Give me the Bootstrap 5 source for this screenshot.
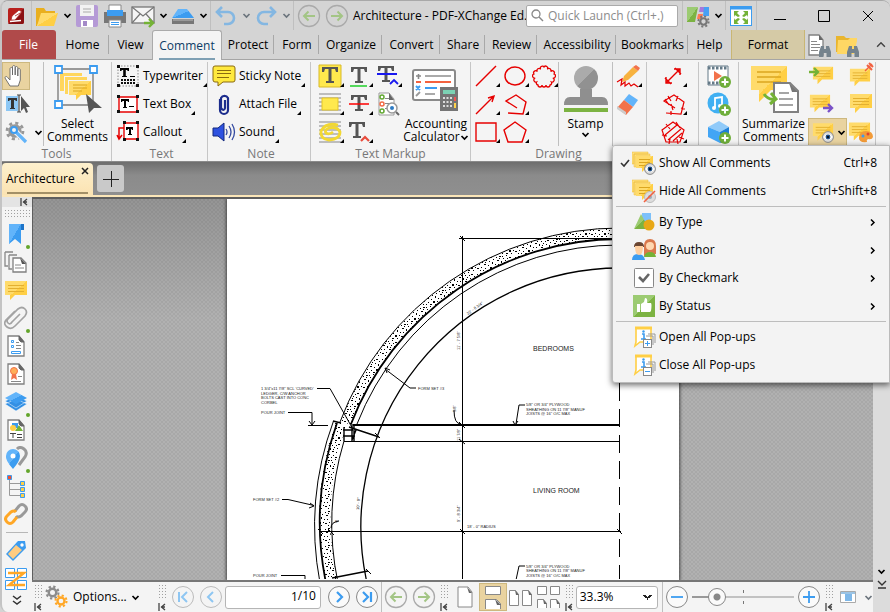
<!DOCTYPE html>
<html lang="en">
<head>
<meta charset="utf-8">
<meta name="viewport" content="width=device-width, initial-scale=1">
<title>Architecture - PDF-XChange Editor</title>
<link href="https://cdn.jsdelivr.net/npm/bootstrap@5.3.0/dist/css/bootstrap.min.css" rel="stylesheet">
<style>
:root{--chrome:#d4d4d4;--panel:#f4f4f4;--sel:#e9d3a0;--rule:#bfbfbf}
body{font-family:"Open Sans","Noto Sans",sans-serif;font-size:12px;line-height:16px;color:#000;background:var(--chrome);min-height:100vh}
button,input,select{font:inherit;color:inherit}
button{background:none;border:0;padding:0;white-space:nowrap;flex-shrink:0}
svg{display:block;flex:none}
.app-shell{min-height:100vh;border-left:2px solid #c4c4c4;border-top:1px solid #a8a8a8;border-radius:8px 8px 0 8px;overflow:hidden}
.i8{width:9px;height:9px}.i20{width:20px;height:20px}.i24{width:24px;height:24px}.i28{width:28px;height:28px}.i48{width:48px;height:48px}
.title-bar{height:29px;background:var(--chrome)}
.title-bar .vrule{margin:0 1px}
.title-text{flex:1 1 0;min-width:0;padding-left:2px}
.tb-btn{width:28px;height:28px;display:flex;align-items:center;justify-content:center}
.chev-btn{width:12px;height:28px;display:flex;align-items:center;justify-content:center}
.vrule{width:1px;align-self:stretch;background:var(--rule);flex:none}
.quick-search{width:152px;height:22px;background:#fff;border:1px solid #aaa;border-radius:2px;flex:none}
.quick-search input{border:0;outline:0;min-width:0;background:none;padding:0}
.quick-search input::placeholder{color:#8c8c8c;opacity:1}
.win-btn{width:44px;height:28px;display:flex;align-items:center;justify-content:center}
.tab-row{display:grid;height:30px;background:var(--chrome);border-bottom:1px solid #a5a5a5;grid-template-columns:54px 54px 42px 70px 53px 45px 63px 58px 45px 52px 79px 72px 42px 74px 1fr}
.tab-btn{border-right:1px solid transparent;display:flex;align-items:center;justify-content:center;text-decoration:none;color:#000;position:relative;white-space:nowrap}
.tab-btn.ruled::after{content:"";position:absolute;right:0;top:5px;bottom:5px;width:1px;background:#a8a8a8}
.tab-file{background:#b04a4a;color:#fff;border-radius:3px 3px 0 0}
.tab-on{background:var(--panel);border:1px solid #aaa;border-bottom:0;border-radius:3px 3px 0 0;color:#0d3c66;margin-bottom:-1px}
.tab-on::before{content:"";position:absolute;left:6px;right:6px;bottom:0;height:2px;background:#7fa0b4}
.tab-format{background:#d5caa6;border-left:1px solid #c9b673;border-right:1px solid #c9b673}
.ribbon{height:102px;background:var(--panel);border-bottom:1px solid #8a8a8a;padding-top:2px}
.rgroup{display:flex;flex-direction:column;border-right:1px solid #c6c6c6;flex:none}
.rgroup-body{height:84px;display:flex}
.rgroup-name{height:15px;line-height:15px;text-align:center;color:#777}
.g-tools{width:110px}.g-text{width:96px}.g-note{width:103px}.g-markup{width:160px}.g-draw{width:176px}.g-measure{width:52px}.g-media{width:40px}.g-comments{width:137px}
.tool-col{width:41px;flex:none}
.cells{display:grid;grid-template-rows:repeat(3,28px);grid-auto-flow:column;grid-auto-columns:29px;flex:none}
.cell{display:flex;align-items:center;justify-content:center;position:relative}
.cell.more::after,.line-btn.more::after{content:"";border:2px solid #000;border-left-color:transparent;border-top-color:transparent;position:absolute;right:0;bottom:3px}
.line-btn{display:flex;align-items:center;gap:3px;height:28px;position:relative;padding-right:4px;align-self:start}
.big-btn{display:flex;flex-direction:column;align-items:center;line-height:13px;padding-top:3px;flex:1 0 auto}
.on{background:var(--sel);border:1px solid #cdb87f}
.split-btn{width:39px;height:28px}
.doc-tabs{height:35px;background:linear-gradient(#6e6e6e,#8b8b8b 40%,#8f8f8f);border-bottom:2px solid #fbe6b8}
.doc-tab{width:91px;margin-top:1px;background:linear-gradient(#fdf0cd,#fbe3b2);border-radius:4px 4px 0 0;position:relative}
.doc-tab::after{content:"";position:absolute;left:5px;right:5px;bottom:1px;height:2px;background:#a39067}
.doc-tab a{color:#000;text-decoration:none}
.add-tab{width:27px;height:27px;background:#c9c9c9;border-radius:3px;display:flex;align-items:center;justify-content:center}
.rail{width:30px;background:var(--panel);flex:none}
.rail-btn{height:28px;width:28px;display:flex;align-items:center;justify-content:center;position:relative}
.rail-btn.dot::after{content:"";width:4px;height:4px;border-radius:50%;background:#63a52a;position:absolute;right:0;bottom:-1px}
.dots{background:radial-gradient(circle,#a0a0a0 0 .5px,transparent 1px) 0 0/3px 3px}
.rail-grip{height:10px;width:26px;margin:2px 2px 1px}
.rail-end{height:10px;background:#e4e4e4}
.canvas-area{border-left:1px solid #5e5e5e;border-top:2px solid #5e5e5e;overflow:hidden;min-width:0;
background:linear-gradient(rgba(0,0,0,.16),rgba(0,0,0,0) 120px),repeating-conic-gradient(#a8a8a8 0 25%,#b1b1b1 0 50%) 0 0/4px 4px}
.paper{background:#fff;width:452px;box-shadow:0 0 3px 1px #444}
.scroll-col{width:18px;background:#dcdcdc;flex:none}
.status-bar{height:32px;background:var(--panel);border-top:2px solid #777}
.sgrip{width:13px;padding-left:2px;flex:none}
.sgrip i{display:block;width:9px;height:15px}
.rbtn{width:28px;height:28px;flex:none;display:flex;align-items:center;justify-content:center}
.num-box{width:96px;height:23px;border:1px solid #b5b5b5;border-radius:3px;background:#fff;flex:none}
.num-box input{border:0;outline:0;width:72px;text-align:right;padding:0;background:none}
.num-box span{padding-bottom:3px}
.zoom-pick{width:82px;height:23px;flex:none;border:1px solid #b5b5b5;border-radius:3px;background-color:#fff;appearance:none;padding:0 3px;
background-image:linear-gradient(45deg,transparent 50%,#222 50% 75%,transparent 75%),linear-gradient(-45deg,transparent 50%,#222 50% 75%,transparent 75%);background-size:5px 5px;background-position:right 9px center,right 5px center;background-repeat:no-repeat}
.zoom-slide{appearance:none;height:22px;width:102px;margin:0 1px;flex:none;background:linear-gradient(#777,#777) 51px 4px/1px 3px no-repeat,linear-gradient(#777,#777) 51px 15px/1px 3px no-repeat,linear-gradient(90deg,#999 0 24px,#c2c2c2 24px) center/100% 2px no-repeat}
.zoom-slide::-webkit-slider-thumb{appearance:none;width:18px;height:18px;border-radius:50%;border:1px solid #888;background:radial-gradient(circle,#888 0 3px,#fafafa 4px)}
.cm-menu{position:absolute;top:144px;right:0;width:278px;background:#f3f3f3;border:1px solid #bbb;border-radius:3px 0 0 3px;box-shadow:0 2px 6px rgba(0,0,0,.6);padding:3px 0;z-index:5}
.cm-item{display:flex;align-items:center;width:100%;height:28px;padding:0 12px 0 7px;text-align:left}
.cm-item .tick{width:12px;flex:none}
.cm-item .lbl{margin-left:3px}
.cm-menu hr{margin:1px 3px;border-color:#888;opacity:.5}
</style>
</head>
<body>
<svg width="0" height="0" class="position-absolute" aria-hidden="true">
<defs>
<linearGradient id="gy" x1="0" y1="0" x2="1" y2="1"><stop offset=".5" stop-color="#ffdb6b"/><stop offset=".5" stop-color="#ffcf45"/></linearGradient>
<linearGradient id="gb" x1="0" y1="0" x2="1" y2="1"><stop offset=".5" stop-color="#62b4fa"/><stop offset=".5" stop-color="#3c9cf0"/></linearGradient>
<linearGradient id="gg" x1="0" y1="0" x2="1" y2="1"><stop offset=".5" stop-color="#9ccb72"/><stop offset=".5" stop-color="#7cb342"/></linearGradient>
<linearGradient id="gr" x1="0" y1="0" x2="1" y2="1"><stop offset=".5" stop-color="#ababab"/><stop offset=".5" stop-color="#919191"/></linearGradient>
<pattern id="speck" width="19" height="17" patternUnits="userSpaceOnUse"><rect width="19" height="17" fill="#fff"/><path d="M1 2h1v1h-1zM4 1h2v1h-2zM8 3h1v1h-1zM11 0h1v1h-1zM14 2h2v1h-2zM17 4h1v1h-1zM2 5h2v1h-2zM6 6h1v2h-1zM10 5h1v1h-1zM13 6h1v1h-1zM16 7h1v2h-1zM0 9h1v1h-1zM3 9h1v1h-1zM8 9h2v1h-2zM12 10h1v1h-1zM5 12h1v1h-1zM1 13h2v1h-2zM9 13h1v1h-1zM14 12h2v2h-2zM18 12h1v1h-1zM7 15h1v1h-1zM11 15h2v1h-2zM4 15h1v1h-1zM16 15h1v1h-1zM7 1h1v1h-1zM12 3h1v1h-1zM4 3h1v1h-1zM9 7h1v1h-1z" fill="#000"/></pattern>
</defs>
<symbol id="chev" viewBox="0 0 9 9"><path d="M1.500 3l3 3 3-3" fill="none" stroke="currentColor" stroke-width="1.700"/></symbol>
<symbol id="arr-r" viewBox="0 0 9 9"><path d="M3 1.500l3 3-3 3" fill="none" stroke="currentColor" stroke-width="1.500"/></symbol>
<symbol id="bub" viewBox="0 0 24 24"><path d="M1 3h22v14H11l-5 5v-5H1z" fill="url(#gy)"/><path d="M4 7.500h16M4 10.500h16M4 13.500h16" stroke="#e3b030"/></symbol>
<symbol id="stack" viewBox="0 0 24 24"><path d="M0 1h16v2H2v10H0zM2 3h16v2H4v11H2z" fill="#ffdf7e" stroke="#e8b93a" stroke-width=".5"/><path d="M4 5h17v12h-7l-4 4v-4H4z" fill="url(#gy)"/><path d="M7 8.500h11M7 11.500h11M7 14.500h11" stroke="#dba620"/></symbol>
<symbol id="eye" viewBox="0 0 12 12"><circle cx="6" cy="6" r="5.400" fill="#ddd" stroke="#8a8a8a"/><path d="M1 6q5-6 10 0q-5 6-10 0z" fill="#fff"/><circle cx="6" cy="6" r="2.400" fill="#1c4e86"/><circle cx="6" cy="6" r="1" fill="#000"/></symbol>
<symbol id="plusdot" viewBox="0 0 12 12"><circle cx="6" cy="6" r="6" fill="#6fae3b"/><path d="M6 2.500v7M2.500 6h7" stroke="#fff" stroke-width="2"/></symbol>
<symbol id="doc" viewBox="0 0 24 24"><path d="M4 2h11l5 6v14H4z" fill="#fff" stroke="#808080" stroke-width="1.300"/><path d="M15 2l5 6h-3l-2-2z" fill="#666" stroke="#666"/></symbol>
<symbol id="gripend" viewBox="0 0 8 8"><path d="M1 0v8M7 1L3.500 4L7 7M3 4h4" fill="none" stroke="#444" stroke-width="1.300"/></symbol>
<symbol id="tt" viewBox="0 0 24 24"><path d="M4 3h16v5h-2l-1-3h-3.500v12h2.500v2H8v-2h2.500V5H7L6 8H4z" fill="#555"/></symbol>
<symbol id="gear" viewBox="0 0 24 24"><circle cx="12" cy="12" r="6" fill="none" stroke="currentColor" stroke-width="4"/><circle cx="12" cy="12" r="9.500" fill="none" stroke="currentColor" stroke-width="3.500" stroke-dasharray="3.700 3.760"/></symbol>
<symbol id="bino" viewBox="0 0 12 12"><path d="M2 1h3v3h2V1h3l2 6v5H7.500V8h-3v4H0V7z" fill="#75838d"/></symbol>
<symbol id="back" viewBox="0 0 24 24"><circle cx="12" cy="12" r="10.500" fill="none" stroke="#aaa" stroke-width="1.300"/><path d="M18 12H7M11.500 7.500L7 12l4.500 4.500" fill="none" stroke="#a3c585" stroke-width="2"/></symbol>
<symbol id="fwd" viewBox="0 0 24 24"><circle cx="12" cy="12" r="10.500" fill="none" stroke="#aaa" stroke-width="1.300"/><path d="M6 12h11M12.500 7.500L17 12l-4.500 4.500" fill="none" stroke="#a3c585" stroke-width="2"/></symbol>
<symbol id="thumbdoc" viewBox="0 0 24 24"><path d="M1 2h8M1 2v14h3M5 5h8M5 5v14h3" fill="none" stroke="#888" stroke-width="1.300"/><path d="M9 8h8l5 5v9H9z" fill="#fff" stroke="#808080" stroke-width="1.300"/><path d="M16 8l6 6h-4z" fill="#555"/><path d="M11 15h6M11 18h9" stroke="#888"/></symbol>
<symbol id="popup" viewBox="0 0 24 24"><path d="M4 3h15v14H8l-5 4l1-4z" fill="#fff" stroke="#ffcf45" stroke-width="1.600"/><path d="M3 3h17" stroke="#ffcf45" stroke-width="3"/><path d="M16 9h7v9M14 11h7v9" fill="none" stroke="#999"/><path d="M10 9h2v5M9 14h5" fill="none" stroke="#3c9cf0" stroke-width="1.600"/><circle cx="11.500" cy="6.500" r="1.200" fill="#3c9cf0"/><rect x="11.500" y="14.500" width="8" height="8" fill="#fff" stroke="#888"/></symbol>
</svg>

<div class="app-shell d-flex flex-column position-relative">
<header class="title-bar d-flex align-items-center">
 <button class="tb-btn" aria-label="Application"><svg class="i20" viewBox="0 0 20 20"><rect x="2" y="2" width="16" height="16" rx="2" fill="#b8201d"/><path d="M2 18L18 2v14a2 2 0 0 1-2 2z" fill="#8a1013"/><path d="M5 14l1-4L13 4l3 2-7 8zM9 10l7-4" fill="#fff" stroke="#a8201d" stroke-width=".8"/><path d="M4 15.500l11-1" stroke="#fff" stroke-width="1.500"/></svg></button>
 <span class="vrule"></span>
 <button class="tb-btn" aria-label="Open"><svg class="i24" viewBox="0 0 24 24"><path d="M1 4h8l2 3h9v4H7L2 22H1z" fill="#e9af1f"/><path d="M6 9h17l-4 13H2z" fill="url(#gy)"/></svg></button>
 <button class="chev-btn" aria-label="Open options"><svg class="i8"><use href="#chev"/></svg></button>
 <button class="tb-btn" aria-label="Save"><svg class="i24" viewBox="0 0 24 24"><rect x="1" y="1" width="22" height="22" rx="2" fill="#b59ad6"/><path d="M5 1h14v11H5z" fill="#f2f2f2"/><path d="M8 5h8M8 8h8" stroke="#aaa"/><path d="M6 16h12v7H6z" fill="#fff"/><path d="M8 17h4v5H8z" fill="#a48ac8"/></svg></button>
 <button class="tb-btn" aria-label="Print"><svg class="i24" viewBox="0 0 24 24"><path d="M6 1h12v6H6z" fill="#fff" stroke="#888"/><path d="M1 8h22v11H1z" fill="#777"/><path d="M4 6h16v6H4z" fill="#3c9cf0"/><path d="M6 16h12v7H6z" fill="#fff" stroke="#888"/><path d="M8 18.500h8M8 20.500h8" stroke="#3c9cf0"/></svg></button>
 <button class="tb-btn" aria-label="E-mail"><svg class="i24" viewBox="0 0 24 24"><rect x="1" y="3" width="22" height="16" fill="#f5f5f5" stroke="#777" stroke-width="1.300"/><path d="M1 3l11 9 11-9M1 19l8-9M23 19l-8-9" fill="none" stroke="#777" stroke-width="1.200"/><path d="M13 19h8M18 15l4 4-4 4" fill="none" stroke="#74b236" stroke-width="2.400"/></svg></button>
 <button class="chev-btn" aria-label="E-mail options"><svg class="i8"><use href="#chev"/></svg></button>
 <button class="tb-btn" aria-label="Scan"><svg class="i24" viewBox="0 0 24 24"><path d="M7 5h9l7 9H1z" fill="url(#gb)"/><path d="M1 15h22v5H1z" fill="#777"/><path d="M2 16h20" stroke="#bbb"/></svg></button>
 <button class="chev-btn" aria-label="Scan options"><svg class="i8"><use href="#chev"/></svg></button>
 <span class="vrule"></span>
 <button class="tb-btn" aria-label="Undo"><svg class="i24" viewBox="0 0 24 24"><path d="M8 3L3 8l5 5M3 8h11a6 6 0 0 1 0 12h-4" fill="none" stroke="#84b7e2" stroke-width="2.600"/></svg></button>
 <button class="chev-btn text-secondary" aria-label="Undo list"><svg class="i8"><use href="#chev"/></svg></button>
 <button class="tb-btn" aria-label="Redo"><svg class="i24" viewBox="0 0 24 24"><path d="M16 3l5 5-5 5M21 8H10a6 6 0 0 0 0 12h4" fill="none" stroke="#84b7e2" stroke-width="2.600"/></svg></button>
 <button class="chev-btn text-secondary" aria-label="Redo list"><svg class="i8"><use href="#chev"/></svg></button>
 <span class="vrule"></span>
 <button class="tb-btn" aria-label="Back"><svg class="i24"><use href="#back"/></svg></button>
 <button class="tb-btn" aria-label="Forward"><svg class="i24"><use href="#fwd"/></svg></button>
 <span class="title-text text-nowrap">Architecture - PDF-XChange Ed..</span>
 <label class="quick-search d-flex align-items-center gap-1 px-1"><svg width="13" height="13" viewBox="0 0 13 13"><circle cx="5" cy="5" r="4" fill="none" stroke="#888" stroke-width="1.300"/><path d="M8 8l4 4" stroke="#888" stroke-width="1.500"/></svg><input class="flex-grow-1" aria-label="Quick Launch" placeholder="Quick Launch (Ctrl+.)"></label>
 <span class="vrule ms-1"></span>
 <button class="tb-btn" aria-label="UI options"><svg class="i24" viewBox="0 0 24 24"><path d="M1 3h11L9 18H1z" fill="url(#gg)"/><path d="M14 3h9l-1 5h-9z" fill="#a678dc"/><path d="M12 10h5l-1 5h-5z" fill="#ff7b52"/><path d="M18 3h5v9h-6z" fill="#46a0f5"/><svg x="11" y="11" width="13" height="13" color="#777"><use href="#gear"/></svg></svg></button>
 <button class="chev-btn" aria-label="UI options list"><svg class="i8"><use href="#chev"/></svg></button>
 <span class="vrule"></span>
 <button class="tb-btn" aria-label="Full screen"><svg class="i24" viewBox="0 0 24 24"><rect x="1.500" y="2.500" width="21" height="19" fill="#fff" stroke="#3c9cf0"/><path d="M1 4h22" stroke="#3c9cf0" stroke-width="3"/><path d="M5 7h5l-2 2 3 3-2 1-3-2-1 2zM19 7h-5l2 2-3 3 2 1 3-2 1 2zM5 20h5l-2-2 3-3-2-1-3 2-1-2zM19 20h-5l2-2-3-3 2-1 3 2 1-2z" fill="#74b236"/></svg></button>
 <span class="vrule"></span>
 <button class="win-btn" aria-label="Minimize"><svg width="12" height="12" viewBox="0 0 12 12"><path d="M0 9.500h12" stroke="#000"/></svg></button>
 <button class="win-btn" aria-label="Maximize"><svg width="12" height="12" viewBox="0 0 12 12"><path d="M.5.5h11v11H.5z" fill="none" stroke="#000"/></svg></button>
 <button class="win-btn" aria-label="Close"><svg width="12" height="12" viewBox="0 0 12 12"><path d="M1 1l10 10M11 1L1 11" stroke="#000"/></svg></button>
</header>

<nav class="tab-row" aria-label="Ribbon tabs">
 <a href="#" class="tab-btn tab-file">File</a><a href="#" class="tab-btn ruled">Home</a><a href="#" class="tab-btn">View</a><a href="#" class="tab-btn tab-on">Comment</a><a href="#" class="tab-btn ruled">Protect</a><a href="#" class="tab-btn ruled">Form</a><a href="#" class="tab-btn ruled">Organize</a><a href="#" class="tab-btn ruled">Convert</a><a href="#" class="tab-btn ruled">Share</a><a href="#" class="tab-btn ruled">Review</a><a href="#" class="tab-btn ruled">Accessibility</a><a href="#" class="tab-btn ruled">Bookmarks</a><a href="#" class="tab-btn">Help</a><a href="#" class="tab-btn tab-format">Format</a>
 <div class="d-flex align-items-center">
  <button class="tb-btn" aria-label="Find"><svg class="i24" viewBox="0 0 24 24"><path d="M2 2h10l4 5v15H2z" fill="#fff" stroke="#808080" stroke-width="1.300"/><path d="M12 2l4 5h-4z" fill="#666"/><path d="M4 8.500h6M4 11.500h9M4 14.500h9M4 17.500h7" stroke="#888"/><svg x="12" y="12" width="12" height="12"><use href="#bino"/></svg></svg></button>
  <button class="tb-btn" aria-label="Search"><svg class="i24" viewBox="0 0 24 24"><path d="M1 3h8l2 2h10v14H1z" fill="#e9b52e"/><path d="M3 7h10l2-2h7v3l-3 13H2z" fill="#ffd764"/><svg x="12" y="12" width="12" height="12"><use href="#bino"/></svg></svg></button>
  <button class="ms-auto me-1" aria-label="Collapse ribbon"><svg width="10" height="10" viewBox="0 0 9 9"><path d="M1 6l3.500-3.500L8 6" fill="none" stroke="#444" stroke-width="1.300"/></svg></button>
 </div>
</nav>

<section class="ribbon d-flex" aria-label="Comment tools">
 <div class="rgroup g-tools"><div class="rgroup-body">
  <div class="d-flex flex-column tool-col">
   <button class="on i28" aria-label="Hand"><svg class="i24" viewBox="0 0 24 24"><path d="M7 22l-5-8c0-2 2-2 3 0l2 2V5c0-2 2.500-2 2.500 0v6V3c0-2 2.700-2 2.700 0v8V4c0-2 2.600-2 2.600 0v8V6c0-2 2.500-2 2.500 0v10l-2 6z" fill="#fff" stroke="#666" stroke-width=".9"/></svg></button>
   <button class="i28" aria-label="Select text"><svg class="i24 ms-1" viewBox="0 0 24 24"><path d="M0 4h12v15H0z" fill="#8cc7f5"/><path d="M2 6h9v3H9.500V8H8v8h1v1H4v-1h1V8H3.500v1H2z" fill="#333"/><path d="M11 3h4M13 3v17M11 20h4" stroke="#444" stroke-width="1.200"/><path d="M15 4v15l3-3 2 5 2-1-2-5h4z" fill="#555"/></svg></button>
   <button class="d-flex align-items-center" aria-label="Tool options"><svg class="i28" viewBox="0 0 28 28"><svg x="3" y="3" width="20" height="20" color="#989898"><use href="#gear"/></svg><path d="M13 13l11 11" stroke="#f4f4f4" stroke-width="5.500"/><path d="M14 14l10 10" stroke="#62b4fa" stroke-width="3.200"/><circle cx="12" cy="12" r="3" fill="#f4f4f4" stroke="#3c9cf0" stroke-width="2"/></svg><svg class="i8 ms-1"><use href="#chev"/></svg></button>
  </div>
  <span class="vrule"></span>
  <button class="big-btn"><svg class="i48" viewBox="0 0 48 48"><path d="M4 4h35v36H4z" fill="none" stroke="#999" stroke-width="1.800"/><path d="M6 8h22v3H10v15H6zM11 12h22v3H14v14h-3z" fill="#ffd65c"/><path d="M15 16h22v14H27l-5 5v-5h-7z" fill="url(#gy)"/><path d="M19 20h14M19 23h14M19 26h9" stroke="#dba620"/><path d="M1 1h7v7H1zM36 1h7v7h-7zM1 36h7v7H1z" fill="#fff" stroke="#3c9cf0" stroke-width="1.800"/><path d="M32 29l16 14h-8l-5 5z" fill="#555"/></svg><span class="mt-1">Select<br>Comments</span></button>
 </div><div class="rgroup-name">Tools</div></div>

 <div class="rgroup g-text ps-1"><div class="rgroup-body flex-column">
  <button class="line-btn more"><svg class="i24" viewBox="0 0 24 24"><path d="M2 2h20v20H2z" fill="none" stroke="#888" stroke-dasharray="1.500 1.500"/><path d="M4 4h9v3h-1.200L11 6h-1.200v6H11v1H6v-1h1.200V6H6L5.200 7H4z" fill="#000"/><path d="M14 12.500h5" stroke="#000"/><path d="M5 16h14M5 19h14" stroke="#111" stroke-width="2" stroke-dasharray="2 1"/><path d="M1 1h3v3H1zM20 1h3v3h-3zM1 20h3v3H1zM20 20h3v3h-3z" fill="#111"/></svg>Typewriter</button>
  <button class="line-btn more"><svg class="i24" viewBox="0 0 24 24"><path d="M3 5h18v15H3z" fill="#fff" stroke="#e60000" stroke-width="1.400"/><path d="M5 7h8v3h-1L11.500 9H10v6h1v1H7v-1h1V9H6.500L6 10H5z" fill="#000"/><path d="M13 14.500h5" stroke="#000"/><path d="M1 3h3v3H1zM20 3h3v3h-3zM1 18h3v3H1zM20 18h3v3h-3z" fill="#111"/></svg>Text Box</button>
  <button class="line-btn more"><svg class="i24" viewBox="0 0 24 24"><path d="M8 3h14v16H8z" fill="#fff" stroke="#e60000" stroke-width="1.400"/><path d="M8 8H3v10M1 15l2 4 3-4" fill="none" stroke="#e60000" stroke-width="1.500"/><path d="M10 7h7v3h-1l-.5-1H15v5h1v1h-4v-1h1V9h-1l-.5 1h-1.500z" fill="#000"/><path d="M7 1h3v3H7zM20 1h3v3h-3zM7 18h3v3H7zM20 18h3v3h-3z" fill="#111"/></svg>Callout</button>
 </div><div class="rgroup-name">Text</div></div>

 <div class="rgroup g-note ps-1"><div class="rgroup-body flex-column">
  <button class="line-btn more"><svg class="i24" viewBox="0 0 24 24"><path d="M3 2h18q2 0 2 2v12q0 2-2 2H11l-5 4v-4H3q-2 0-2-2V4q0-2 2-2z" fill="#ffe93e" stroke="#8a6a10"/><path d="M5 6.500h14M5 9.500h14M5 13.500h12" stroke="#8a6a10"/></svg>Sticky Note</button>
  <button class="line-btn more"><svg class="i24" viewBox="0 0 24 24"><path d="M8 7v11a4 4 0 0 0 8 0V6a4 4 0 0 0-7 0v10q3 4 4 0V8" fill="none" stroke="#1b2c8c" stroke-width="2.200"/></svg>Attach File</button>
  <button class="line-btn more"><svg class="i24" viewBox="0 0 24 24"><path d="M1 8h5l6-5v18l-6-5H1z" fill="#2e52e0" stroke="#13287e"/><path d="M14 9q2 3 0 6M17 6q4 6 0 12M20 4q5 8 0 16" fill="none" stroke="#3349a0" stroke-width="1.300"/></svg>Sound</button>
 </div><div class="rgroup-name">Note</div></div>

 <div class="rgroup g-markup"><div class="rgroup-body">
  <div class="cells ps-1">
   <button class="cell more" aria-label="Highlight"><svg class="i24" viewBox="0 0 24 24"><path d="M1 1h22v22H1z" fill="#ffe94d" stroke="#d8b928"/><use href="#tt"/></svg></button>
   <button class="cell more" aria-label="Highlight area"><svg class="i24" viewBox="0 0 24 24"><path d="M1 2h22M1 6h22M1 10h22M1 14h22M1 18h22M1 22h22" stroke="#aaa" stroke-width="1.500"/><path d="M4 6h16v12H4z" fill="#ffe94d" stroke="#e3c52a"/></svg></button>
   <button class="cell more" aria-label="Freehand highlight"><svg class="i24" viewBox="0 0 24 24"><path d="M1 2h22M1 6h22M1 10h22M1 14h22M1 18h22M1 22h22" stroke="#aaa" stroke-width="1.500"/><path d="M20 5Q8 2 3 11q-1 8 8 9 11-1 11-8-3-6-11-4-5 2-3 5 3 2 7-1" fill="none" stroke="#f2d832" stroke-width="2.800"/></svg></button>
   <button class="cell more" aria-label="Underline"><svg class="i24" viewBox="0 0 24 24"><use href="#tt"/><path d="M3 22h17" stroke="#1fd12a" stroke-width="1.600"/></svg></button>
   <button class="cell more" aria-label="Strikeout"><svg class="i24" viewBox="0 0 24 24"><use href="#tt"/><path d="M2 12h20" stroke="#f00" stroke-width="1.600"/></svg></button>
   <button class="cell more" aria-label="Squiggly"><svg class="i24" viewBox="0 0 24 24"><svg x="-2" y="-1" width="24" height="24"><use href="#tt"/></svg><path d="M14 21l4-4 4 4" fill="none" stroke="#e84b3c" stroke-width="2.200"/></svg></button>
   <button class="cell more" aria-label="Replace text"><svg class="i24" viewBox="0 0 24 24"><svg x="-2" y="-1" width="24" height="24"><use href="#tt"/></svg><path d="M1 10h20M14 20l4-4 4 4" fill="none" stroke="#1818f0" stroke-width="1.800"/></svg></button>
   <button class="cell" aria-label="Search and mark up"><svg class="i24" viewBox="0 0 24 24"><path d="M3 1h10l5 6v16H3z" fill="#fff" stroke="#999"/><path d="M13 1l5 7h-5z" fill="#666"/><path d="M9 6.500h4M9 11.500h6M9 16.500h4" stroke="#888"/><circle cx="6" cy="5" r="2" fill="#fff" stroke="#62a832" stroke-width="1.500"/><circle cx="6" cy="12" r="2" fill="#fff" stroke="#f26b46" stroke-width="1.500"/><circle cx="6" cy="19" r="2" fill="#fff" stroke="#62a832" stroke-width="1.500"/><circle cx="16" cy="16" r="5" fill="#fff" stroke="#999" stroke-width="1.500"/><circle cx="16" cy="16" r="2" fill="#2d7bc4"/><path d="M20 20l3 3" stroke="#666" stroke-width="2"/></svg></button>
  </div>
  <button class="big-btn"><svg class="i48" viewBox="0 0 48 48"><rect x="1" y="5" width="42" height="30" rx="2" fill="#fff" stroke="#8a8a8a" stroke-width="2"/><path d="M4 11h5M6.500 9v5" stroke="#888" stroke-width="1.600"/><path d="M13 11h26M13 29h10" stroke="#aaa" stroke-width="2"/><path d="M4 17h5M13 17h26" stroke="#f4623f" stroke-width="2"/><path d="M4 21l4 4M8 21l-4 4M13 23h12" stroke="#3c9cf0" stroke-width="2"/><path d="M4 31l4-4" stroke="#999" stroke-width="1.800"/><path d="M28 22h18v24H28z" fill="#757575"/><path d="M31 25h12v4H31z" fill="#7cd2b4"/><path d="M31 33h9M31 37h9M31 41h9" stroke="#ddd" stroke-width="2" stroke-dasharray="2 1.500"/><path d="M43 32v4" stroke="#e55" stroke-width="2"/><path d="M43 38v5" stroke="#ffd24a" stroke-width="2"/></svg><span class="mt-1">Accounting<br>Calculator<svg class="i8 d-inline-block"><use href="#chev"/></svg></span></button>
 </div><div class="rgroup-name">Text Markup</div></div>

 <div class="rgroup g-draw"><div class="rgroup-body">
  <div class="cells">
   <button class="cell more" aria-label="Line"><svg class="i24" viewBox="0 0 24 24"><path d="M2 22L22 2" stroke="#e60000" stroke-width="1.400"/></svg></button>
   <button class="cell more" aria-label="Arrow"><svg class="i24" viewBox="0 0 24 24"><path d="M2 22L20 4M14 6l6-2-2 6" stroke="#e60000" stroke-width="1.400" fill="none"/></svg></button>
   <button class="cell more" aria-label="Rectangle"><svg class="i24" viewBox="0 0 24 24"><path d="M2 3h20v18H2z" stroke="#e60000" stroke-width="1.400" fill="none"/></svg></button>
   <button class="cell more" aria-label="Oval"><svg class="i24" viewBox="0 0 24 24"><ellipse cx="12" cy="12" rx="10" ry="9" stroke="#e60000" stroke-width="1.400" fill="none"/></svg></button>
   <button class="cell more" aria-label="Polyline"><svg class="i24" viewBox="0 0 24 24"><path d="M14 16L3 9l10-6 10 7-3 12-15-1" stroke="#e60000" stroke-width="1.400" fill="none"/></svg></button>
   <button class="cell more" aria-label="Polygon"><svg class="i24" viewBox="0 0 24 24"><path d="M12 2l11 8-4 12H5L1 10z" stroke="#e60000" stroke-width="1.400" fill="none"/></svg></button>
   <button class="cell more" aria-label="Cloud"><svg class="i24" viewBox="0 0 24 24"><path d="M12 3a2 2 0 0 1 3.300 2.300a2 2 0 0 1 3.300 2.300a2 2 0 0 1 3.400 2.400a2 2 0 0 1-1.300 4a2 2 0 0 1-1.300 4a2 2 0 0 1-1.400 3a2 2 0 0 1-4 0a2 2 0 0 1-4 0a2 2 0 0 1-4 0a2 2 0 0 1-1.400-3a2 2 0 0 1-1.300-4a2 2 0 0 1-1.300-4a2 2 0 0 1 3.400-2.400a2 2 0 0 1 3.300-2.300a2 2 0 0 1 3.300-2.300z" stroke="#e60000" stroke-width="1.300" fill="none"/></svg></button>
  </div>
  <span class="vrule"></span>
  <button class="big-btn"><svg class="i48" viewBox="0 0 48 48"><circle cx="24" cy="13" r="12" fill="url(#gr)"/><path d="M18 24h12v8h10q6 0 6 8H2q0-8 6-8h10z" fill="#8f8f8f"/><path d="M2 43h44v4H2z" fill="#7cb342"/></svg><span class="mt-1">Stamp</span><svg class="i8"><use href="#chev"/></svg></button>
  <span class="vrule"></span>
  <div class="cells pe-1">
   <button class="cell more" aria-label="Pencil"><svg class="i24" viewBox="0 0 24 24"><path d="M17 3l5 4L12 16l-6 2 2-6z" fill="#f7b23f"/><path d="M17 3l3-2 4 3-2 3z" fill="#f2724b"/><path d="M1 18l5-3-1 6 4-3 0 4 4-3 2 3 3-2 4 3" fill="none" stroke="#e60000" stroke-width="1.200"/></svg></button>
   <button class="cell" aria-label="Eraser"><svg class="i24" viewBox="0 0 24 24"><path d="M13 2l9 6-5 7-9-7z" fill="#62b4fa"/><path d="M8 8l9 7-7 8-9-7z" fill="#f2724b"/><path d="M1 14v3l9 6v-3z" fill="#ccc"/></svg></button>
  </div>
 </div><div class="rgroup-name">Drawing</div></div>

 <div class="rgroup g-measure"><div class="rgroup-body justify-content-center"><div class="cells">
   <button class="cell more" aria-label="Distance"><svg class="i24" viewBox="0 0 24 24"><path d="M5 19L19 5M13 5h6v6M5 13v6h6M4 14l6 6M14 4l6 6" stroke="#e60000" stroke-width="1.400" fill="none"/></svg></button>
   <button class="cell more" aria-label="Perimeter"><svg class="i24" viewBox="0 0 24 24"><path d="M14 16L3 9l10-6 10 7-3 12-15-1M7 4l3 5M17 4l-2 5M4 7l4 6M20 16l4 1M10 12l2 6M10 19v4" stroke="#e60000" stroke-width="1.200" fill="none"/></svg></button>
   <button class="cell more" aria-label="Area"><svg class="i24" viewBox="0 0 24 24"><path d="M12 2l11 8-4 12H5L1 10zM4 15L16 5M7 20L20 9M12 21l9-8M5 4l4 5M15 2l4 6M1 15l5 1M18 17l5 2M9 19l-1 5M16 19l1 5" stroke="#e60000" stroke-width="1.200" fill="none"/></svg></button>
 </div></div></div>

 <div class="rgroup g-media"><div class="rgroup-body justify-content-center"><div class="cells">
   <button class="cell" aria-label="Video"><svg class="i24" viewBox="0 0 24 24"><path d="M1 2h20v19H1z" fill="#fff" stroke="#657a88"/><path d="M1 4h20M1 19h20" stroke="#657a88" stroke-width="3" stroke-dasharray="2.500 1.500"/><path d="M7 7l8 5-8 5z" fill="#f2724b"/><svg x="12" y="12" width="12" height="12"><use href="#plusdot"/></svg></svg></button>
   <button class="cell" aria-label="Audio"><svg class="i24" viewBox="0 0 24 24"><circle cx="11" cy="11" r="10.500" fill="#41b0f2"/><path d="M8 16V6l7-1v9" fill="none" stroke="#fff" stroke-width="1.800"/><circle cx="7" cy="16" r="2" fill="#fff"/><circle cx="13" cy="14" r="2" fill="#fff"/><svg x="12" y="12" width="12" height="12"><use href="#plusdot"/></svg></svg></button>
   <button class="cell" aria-label="3D"><svg class="i24" viewBox="0 0 24 24"><path d="M1 7l11-6 10 6-9 5z" fill="#90caf9"/><path d="M1 7l12 5v11L1 17z" fill="#42a5f5"/><path d="M13 12l9-5v11l-9 5z" fill="#1e7fd6"/><svg x="12" y="12" width="12" height="12"><use href="#plusdot"/></svg></svg></button>
 </div></div></div>

 <div class="rgroup g-comments"><div class="rgroup-body">
  <button class="big-btn"><svg width="54" height="48" viewBox="0 0 54 48"><path d="M4 1h36v24H24l-12 12V25H4z" fill="url(#gy)"/><path d="M10 7h24M10 12h24M10 17h24" stroke="#dba620" stroke-width="1.500"/><path d="M27 18h16l8 8v21H27z" fill="#fff" stroke="#808080" stroke-width="2"/><path d="M42 18l9 9h-6z" fill="#777"/><path d="M32 28h10M32 34h14M32 40h14" stroke="#888" stroke-width="1.600"/><path d="M17 29q4 6 10 5M24 28l5 6-6 5" fill="none" stroke="#74b236" stroke-width="3"/></svg><span class="mt-1">Summarize<br>Comments</span></button>
  <div class="d-flex flex-column">
   <button class="i28" aria-label="Import comments"><svg class="i28" viewBox="0 0 28 28"><svg x="4" y="1" width="22" height="24"><use href="#bub"/></svg><path d="M1 10h8M6 6l4 4-4 4" fill="none" stroke="#74b236" stroke-width="2.400"/></svg></button>
   <button class="i28" aria-label="Export comments"><svg class="i28" viewBox="0 0 28 28"><svg x="1" y="1" width="22" height="24"><use href="#bub"/></svg><path d="M15 18h9M20 14l4 4-4 4" fill="none" stroke="#7a52c7" stroke-width="2.400"/></svg></button>
   <button class="on split-btn d-flex align-items-center" aria-label="Show comments" aria-expanded="true"><svg class="i28" viewBox="0 0 28 28"><svg x="3" y="2" width="22" height="23"><use href="#bub"/></svg><svg x="13" y="13" width="12" height="12"><use href="#eye"/></svg></svg><svg class="i8"><use href="#chev"/></svg></button>
  </div>
  <div class="d-flex flex-column">
   <button class="i28" aria-label="Pin comment"><svg class="i28" viewBox="0 0 28 28"><svg x="2" y="4" width="22" height="22"><use href="#bub"/></svg><path d="M25 2l-7 7" stroke="#f2603f" stroke-width="1.500"/><path d="M20 3l5 5M22 1l4 4" stroke="#f2603f" stroke-width="2"/></svg></button>
   <button class="i28" aria-label="Comments list"><svg class="i28" viewBox="0 0 28 28"><svg x="2" y="1" width="24" height="24"><use href="#bub"/></svg></svg></button>
   <button class="i28" aria-label="Comment styles"><svg class="i28" viewBox="0 0 28 28"><svg x="1" y="1" width="23" height="24"><use href="#bub"/></svg><path d="M12 20q0-7 7-7t7 6q-1 3-5 2-2 1-1 3-8 1-8-4z" fill="#f29b38"/><circle cx="16" cy="18" r="1.500" fill="#3c9cf0"/><circle cx="21" cy="16" r="1.500" fill="#e0452f"/></svg></button>
  </div>
 </div></div>
</section>

<div class="doc-tabs d-flex">
 <div class="doc-tab d-flex align-items-center ps-1"><a href="#">Architecture</a><button class="ms-auto me-1 align-self-start mt-1" aria-label="Close tab"><svg width="8" height="8" viewBox="0 0 8 8"><path d="M1 1l6 6M7 1L1 7" stroke="#222" stroke-width="1.500"/></svg></button></div>
 <button class="add-tab align-self-center ms-1" aria-label="New tab"><svg width="16" height="16" viewBox="0 0 16 16"><path d="M8.500 0v16M0 8.500h16" stroke="#222"/></svg></button>
</div>

<div class="d-flex flex-grow-1">
 <aside class="rail d-flex flex-column">
  <div class="rail-end d-flex justify-content-end px-1"><svg width="8" height="10" viewBox="0 0 8 8"><use href="#gripend"/></svg></div>
  <div class="rail-grip dots"></div>
  <button class="rail-btn dot" aria-label="Bookmarks"><svg class="i24" viewBox="0 0 24 24"><path d="M5 2h12v20l-6-5-6 5z" fill="url(#gb)"/><path d="M17 2h3v6h-3z" fill="#1e74c8"/></svg></button>
  <button class="rail-btn" aria-label="Thumbnails"><svg class="i24"><use href="#thumbdoc"/></svg></button>
  <button class="rail-btn" aria-label="Comments"><svg class="i24"><use href="#bub"/></svg></button>
  <button class="rail-btn dot" aria-label="Attachments"><svg class="i24" viewBox="0 0 24 24"><path d="M16 8l-8 8q-2 3-4 1t0-4L14 3q4-3 7 0t0 7L11 20q-4 4-8 1t-1-7l9-9" fill="none" stroke="#a3a3a3" stroke-width="1.700"/></svg></button>
  <button class="rail-btn" aria-label="Fields"><svg class="i24"><use href="#doc"/><path d="M7.500 6.500h2v2h-2zM7.500 11.500h2v2h-2zM7.500 17.500h9v2h-9z" fill="none" stroke="#3c9cf0"/><path d="M12 8.500h3M12 11.500h5M12 14.500h5" stroke="#888"/></svg></button>
  <button class="rail-btn" aria-label="Signatures"><svg class="i24"><use href="#doc"/><path d="M8 12l-1 6 3-2 3 2-1-6z" fill="#f2724b"/><circle cx="10" cy="9" r="3.500" fill="#ffae58" stroke="#f2724b"/><path d="M14 14.500h4M7 19.500h10" stroke="#888"/></svg></button>
  <button class="rail-btn dot" aria-label="Layers"><svg class="i24" viewBox="0 0 24 24"><path d="M1 14l11-5 11 5-11 7zM1 11l11-5 11 5-11 7z" fill="#3390e4" stroke="#fff" stroke-width=".5"/><path d="M1 8l11-6 11 6-11 6z" fill="url(#gb)"/></svg></button>
  <button class="rail-btn" aria-label="Content"><svg class="i24"><use href="#doc"/><path d="M8 5h6v5H8z" fill="#3c9cf0"/><circle cx="9" cy="10" r="3" fill="#ffcf45"/><path d="M11 13l4-6 4 6z" fill="#74b236"/><path d="M6 15.500h6M9 15v5M13 16.500h5M13 19.500h5" stroke="#444"/></svg></button>
  <button class="rail-btn dot" aria-label="Destinations"><svg class="i24" viewBox="0 0 24 24"><path d="M13 3q3-3 7 0t1 8l-6 8" fill="none" stroke="#999" stroke-width="3"/><path d="M9 23Q1 14 2 10a7 7 0 0 1 14 0q0 5-7 13z" fill="url(#gb)"/><circle cx="9" cy="10" r="2.500" fill="#fff"/></svg></button>
  <button class="rail-btn" aria-label="Structure"><svg class="i24" viewBox="0 0 24 24"><path d="M5.500 3v18.500h12M5 9.500h13M5 15.500h13" fill="none" stroke="#999"/><path d="M3.500 1.500h4v4h-4z" fill="#f2502f" stroke="#3c9cf0"/><path d="M16.500 7.500h4v4h-4zM16.500 13.500h4v4h-4zM16.500 19.500h4v4h-4z" fill="#ffcf45" stroke="#3c9cf0"/></svg></button>
  <button class="rail-btn" aria-label="Links"><svg class="i24" viewBox="0 0 24 24"><path d="M11 9l4-5q3-3 6 0t0 6l-4 4q-3 2-5 0" fill="none" stroke="#999" stroke-width="3"/><path d="M13 15l-4 5q-3 3-6 0t0-6l4-4q3-2 5 0" fill="none" stroke="#ffa726" stroke-width="3"/></svg></button>
  <hr class="my-1 mx-1">
  <button class="rail-btn" aria-label="Tags"><svg class="i24" viewBox="0 0 24 24"><path d="M14 2h7l1 7L9 22l-7-7z" fill="#3c9cf0"/><path d="M12 6l6 5-9 9-5-5z" fill="#ffcc80"/><circle cx="18" cy="6" r="1.700" fill="#fff"/></svg></button>
  <button class="rail-btn" aria-label="Order"><svg class="i24" viewBox="0 0 24 24"><path d="M1.500 1.500h9v9h-9zM13.500 1.500h9v9h-9zM1.500 13.500h9v9h-9zM13.500 13.500h9v9h-9z" fill="#fff" stroke="#3c9cf0"/><path d="M4 6h16L5 18h16" fill="none" stroke="#ffa726" stroke-width="2.400"/></svg></button>
  <button class="d-flex justify-content-center" aria-label="More panes"><svg width="12" height="14" viewBox="0 0 12 14"><path d="M2 3l4 3 4-3M2 8l4 3 4-3" fill="none" stroke="#333" stroke-width="1.500"/></svg></button>
 </aside>
 <div class="d-flex flex-column flex-grow-1">
 <main class="d-flex flex-grow-1">
 <div class="canvas-area flex-grow-1 d-flex justify-content-center">
  <div class="paper">
  <svg class="w-100" viewBox="226 199 452 380" font-family="Liberation Sans, Arial, sans-serif" font-size="4" fill="#222">
   <g fill="none">
    <path d="M619 233.500A293.500 293.500 0 0 0 345 423" stroke="url(#speck)" stroke-width="11"/>
    <path d="M340 423A293.500 293.500 0 0 0 331 583" stroke="url(#speck)" stroke-width="11"/>
    <g stroke="#000">
     <path d="M619 228A299 299 0 0 0 339 422M619 245A282 282 0 0 0 356 424M332.500 421A305 305 0 0 0 319 583" stroke-width="1"/>
     <path d="M619 239A288 288 0 0 0 350 424M336 423A299 299 0 0 0 325 583" stroke-width="1.800"/>
     <path d="M343 441A288 288 0 0 0 337 583"/>
     <path d="M619 268A259 259 0 0 0 366 583" stroke-width="1.300"/>
     <path d="M352 425H619" stroke-width="2"/>
     <path d="M343 441.500H619M458 238.500H612M461.500 236V580M319 531.500H620" stroke-width="1"/>
     <path d="M618.500 383V580" stroke-dasharray="18 8"/>
     <path d="M332 421l8 2M348 427l30 10M331 578l36-7M342 430h10M342 436h12M343 427v14M351 424v17M353 425v16M355 430l-4 10" stroke-width="1.400"/>
     <path d="M316 388.500h13l22 39M287 412.500h24v12M307 425.500h20M281 499.500h6l26 6M384 369l25 19h6M515 424l3-19h6M515 580l3-14h6M280 575.500h24v4M453 410q0 14 7 14M330 528q0-6 8-7"/>
     <path d="M308 421l3 4 3-4M309 503l4 3-5 2M389 370l-5-2 2 5M512 421l2 4 3-4M458 422l6 6M459 529l5 5M616 529l5 5M317 529l5 5M327 529l6 6M459 236l5 5M374 433l5 5M365 569l5 5M458 439l6 5"/>
    </g>
   </g>
   <text x="260" y="390">1 3/4"x11 7/8" SCL 'CURVED'</text><text x="260" y="395">LEDGER, C/W ANCHOR</text><text x="260" y="399">BOLTS CAST INTO CONC</text><text x="260" y="404">CORBEL</text><text x="260" y="414">POUR JOINT</text><text x="252" y="501">FORM SET #2</text><text x="252" y="577">POUR JOINT</text><text x="417" y="390">FORM SET #3</text>
   <text x="525" y="406">5/8" OR 3/4" PLYWOOD</text><text x="525" y="411">SHEATHING ON 11 7/8" MANUF</text><text x="525" y="415">JOISTS @ 16" O/C MAX</text>
   <text x="525" y="568">5/8" OR 3/4" PLYWOOD</text><text x="525" y="572">SHEATHING ON 11 7/8" MANUF</text><text x="525" y="577">JOISTS @ 16" O/C MAX</text>
   <text x="466" y="528">18' - 0"  RADIUS</text><text x="334" y="523">8"</text>
   <text transform="translate(459 350) rotate(-90)">11' - 7 5/8"</text><text transform="translate(459 441) rotate(-90)">11 7/8"</text><text transform="translate(455 412) rotate(-90)">5/8"</text><text transform="translate(459 522) rotate(-90)">9' - 8 3/4"</text><text transform="translate(358 510) rotate(-85)">10' - 0"</text><text transform="translate(467 315) rotate(-36)">22' - 8 3/4"</text>
   <g font-size="7"><text x="532" y="351">BEDROOMS</text><text x="532" y="493">LIVING ROOM</text></g>
  </svg>
  </div>
 </div>
 <div class="scroll-col d-flex flex-column justify-content-end align-items-center pb-1"><svg class="i8"><use href="#chev"/></svg></div>
 </main>

 <footer class="d-flex">
 <div class="status-bar d-flex align-items-center flex-grow-1">
  <span class="sgrip"><i class="dots"></i><svg class="mt-1" width="8" height="8"><use href="#gripend"/></svg></span>
  <button class="d-flex align-items-center gap-1 me-3"><svg width="24" height="24" viewBox="0 0 24 24"><svg x="0" y="0" width="15" height="15" color="#8c8c8c"><use href="#gear"/></svg><svg x="9" y="9" width="14" height="14" color="#ffa726"><use href="#gear"/></svg></svg>Options...<svg class="i8"><use href="#chev"/></svg></button>
  <span class="sgrip"><i class="dots"></i><svg class="mt-1" width="8" height="8"><use href="#gripend"/></svg></span>
  <button class="rbtn" aria-label="First page"><svg class="i24" viewBox="0 0 24 24"><circle cx="12" cy="12" r="10.500" fill="none" stroke="#bbb"/><path d="M8 7v10M16 7l-5 5 5 5" fill="none" stroke="#8ec6f2" stroke-width="2"/></svg></button>
  <button class="rbtn" aria-label="Previous page"><svg class="i24" viewBox="0 0 24 24"><circle cx="12" cy="12" r="10.500" fill="none" stroke="#bbb"/><path d="M14 7l-5 5 5 5" fill="none" stroke="#8ec6f2" stroke-width="2"/></svg></button>
  <label class="num-box d-flex align-items-center"><input value="1" aria-label="Page number"><span>/10</span></label>
  <button class="rbtn ms-1" aria-label="Next page"><svg class="i24" viewBox="0 0 24 24"><circle cx="12" cy="12" r="10.500" fill="#fafafa" stroke="#888"/><path d="M10 7l5 5-5 5" fill="none" stroke="#3c9cf0" stroke-width="2.200"/></svg></button>
  <button class="rbtn" aria-label="Last page"><svg class="i24" viewBox="0 0 24 24"><circle cx="12" cy="12" r="10.500" fill="#fafafa" stroke="#888"/><path d="M8 7l5 5-5 5M16 7v10" fill="none" stroke="#3c9cf0" stroke-width="2.200"/></svg></button>
  <span class="vrule"></span>
  <button class="rbtn" aria-label="Previous view"><svg class="i24"><use href="#back"/></svg></button>
  <button class="rbtn" aria-label="Next view"><svg class="i24"><use href="#fwd"/></svg></button>
  <span class="sgrip"><i class="dots"></i><svg class="mt-1" width="8" height="8"><use href="#gripend"/></svg></span>
  <button class="rbtn" aria-label="Single page"><svg class="i28" viewBox="0 0 28 28"><path d="M7 4h10l4 5v15H7z" fill="#fff" stroke="#888"/><path d="M16 4l5 6h-3z" fill="#666"/></svg></button>
  <button class="rbtn on" aria-label="Continuous"><svg viewBox="0 0 26 26" width="26" height="26"><path d="M5.500 2.500h15v8h-15zM5.500 25V15.500h11l4 4V25" fill="#fff" stroke="#888"/><path d="M15 15l6 6h-4z" fill="#666"/></svg></button>
  <button class="rbtn" aria-label="Two pages"><svg class="i28" viewBox="0 0 28 28"><path d="M2.500 7.500h6l3 4v11h-9zM15.500 7.500h6l3 4v11h-9z" fill="#fff" stroke="#888"/><path d="M8 7l4 5h-3zM21 7l4 5h-3z" fill="#666"/></svg></button>
  <button class="rbtn" aria-label="Two pages continuous"><svg class="i28" viewBox="0 0 28 28"><path d="M2.500 3.500h9v8h-9zM15.500 3.500h9v8h-9zM2.500 25v-8.500h6l3 4V25M15.500 25v-8.500h6l3 4V25" fill="#fff" stroke="#888"/><path d="M8 16l4 5h-3zM21 16l4 5h-3z" fill="#666"/></svg></button>
  <span class="sgrip"><i class="dots"></i><svg class="mt-1" width="8" height="8"><use href="#gripend"/></svg></span>
  <select class="zoom-pick" aria-label="Zoom"><option>33.3%</option></select>
  <span class="vrule ms-1"></span>
  <button class="rbtn" aria-label="Zoom out"><svg class="i24" viewBox="0 0 24 24"><circle cx="12" cy="12" r="10.500" fill="#fafafa" stroke="#888"/><path d="M6 12h12" stroke="#3c9cf0" stroke-width="1.800"/></svg></button>
  <input class="zoom-slide" type="range" min="0" max="100" value="19" aria-label="Zoom slider">
  <button class="rbtn" aria-label="Zoom in"><svg class="i24" viewBox="0 0 24 24"><circle cx="12" cy="12" r="10.500" fill="#fafafa" stroke="#888"/><path d="M6 12h12M12 6v12" stroke="#3c9cf0" stroke-width="1.800"/></svg></button>
  <span class="sgrip"><i class="dots"></i><svg class="mt-1" width="8" height="8"><use href="#gripend"/></svg></span>
  <button class="d-flex align-items-center gap-1 ps-1 text-secondary" aria-label="Panes"><svg width="16" height="12" viewBox="0 0 16 12"><path d="M.5.5h15v11H.5z" fill="#fff" stroke="#aaa"/><path d="M5 3h7v7H5z" fill="#7fb8e8"/><path d="M1 2h14" stroke="#9cc4e4" stroke-width="2"/></svg><svg class="i8 ms-1"><use href="#chev"/></svg></button>
 </div>
 <div class="scroll-col d-flex justify-content-center"><svg width="12" height="10" viewBox="0 0 12 10"><path d="M2 1l4 4 4-4M2 8h8" fill="none" stroke="#333" stroke-width="1.400"/></svg></div>
 </footer>
 </div>
</div>

<div class="cm-menu" role="menu">
 <button class="cm-item" role="menuitem"><span class="tick"><svg width="10" height="10" viewBox="0 0 10 10"><path d="M1 5l3 3 5-6" fill="none" stroke="#333" stroke-width="1.600"/></svg></span><svg class="i24"><use href="#stack"/><use href="#eye" x="12" y="12" width="12" height="12"/></svg><span class="lbl">Show All Comments</span><span class="ms-auto">Ctrl+8</span></button>
 <button class="cm-item" role="menuitem"><span class="tick"></span><svg class="i24"><use href="#stack"/><circle cx="18" cy="18" r="5.500" fill="#ddd" stroke="#bbb"/><circle cx="18" cy="18" r="2" fill="#9ab"/><path d="M12 23L23 12" stroke="#f2603f" stroke-width="1.600"/></svg><span class="lbl">Hide All Comments</span><span class="ms-auto">Ctrl+Shift+8</span></button>
 <hr>
 <button class="cm-item" role="menuitem"><span class="tick"></span><svg class="i24" viewBox="0 0 24 24"><path d="M10 3h9v11h-9z" fill="#7cc0fa"/><path d="M9 4l8 15H2z" fill="url(#gg)"/><circle cx="17" cy="15" r="5.500" fill="#e8a817"/></svg><span class="lbl">By Type</span><svg class="i8 ms-auto"><use href="#arr-r"/></svg></button>
 <button class="cm-item" role="menuitem"><span class="tick"></span><svg class="i24" viewBox="0 0 24 24"><path d="M12 18V8q0-7 6-7t6 7v8z" fill="#d9784c"/><path d="M12 19q1-5 6-5t6 5z" fill="#74b236"/><circle cx="18" cy="8" r="4" fill="#ffd7b0"/><path d="M0 22q0-6 6-6t7 6z" fill="#3c9cf0"/><path d="M2 9q0-5 5-5t5 5z" fill="#6b4632"/><path d="M3 8h8q0 9-4 9t-4-9z" fill="#ffcfa0"/></svg><span class="lbl">By Author</span><svg class="i8 ms-auto"><use href="#arr-r"/></svg></button>
 <button class="cm-item" role="menuitem"><span class="tick"></span><svg class="i24" viewBox="0 0 24 24"><rect x="2.500" y="2.500" width="19" height="19" rx="1" fill="#fff" stroke="#888"/><path d="M7 11l4 4 6-7" fill="none" stroke="#666" stroke-width="2.600"/></svg><span class="lbl">By Checkmark</span><svg class="i8 ms-auto"><use href="#arr-r"/></svg></button>
 <button class="cm-item" role="menuitem"><span class="tick"></span><svg class="i24" viewBox="0 0 24 24"><path d="M1 1h22v22H1z" fill="url(#gg)"/><path d="M5 10h3v8H5zM9 10l3-2 1-4q3 0 2 5h4q1 1 0 8l-1 1H9z" fill="#fff"/></svg><span class="lbl">By Status</span><svg class="i8 ms-auto"><use href="#arr-r"/></svg></button>
 <hr>
 <button class="cm-item" role="menuitem"><span class="tick"></span><svg class="i24"><use href="#popup"/><path d="M13 18.500h5M15.500 16v5" stroke="#3c9cf0"/></svg><span class="lbl">Open All Pop-ups</span></button>
 <button class="cm-item" role="menuitem"><span class="tick"></span><svg class="i24"><use href="#popup"/><path d="M13 18.500h5" stroke="#3c9cf0"/></svg><span class="lbl">Close All Pop-ups</span></button>
</div>
</div>
<script src="https://cdn.jsdelivr.net/npm/bootstrap@5.3.0/dist/js/bootstrap.bundle.min.js"></script>
</body>
</html>
